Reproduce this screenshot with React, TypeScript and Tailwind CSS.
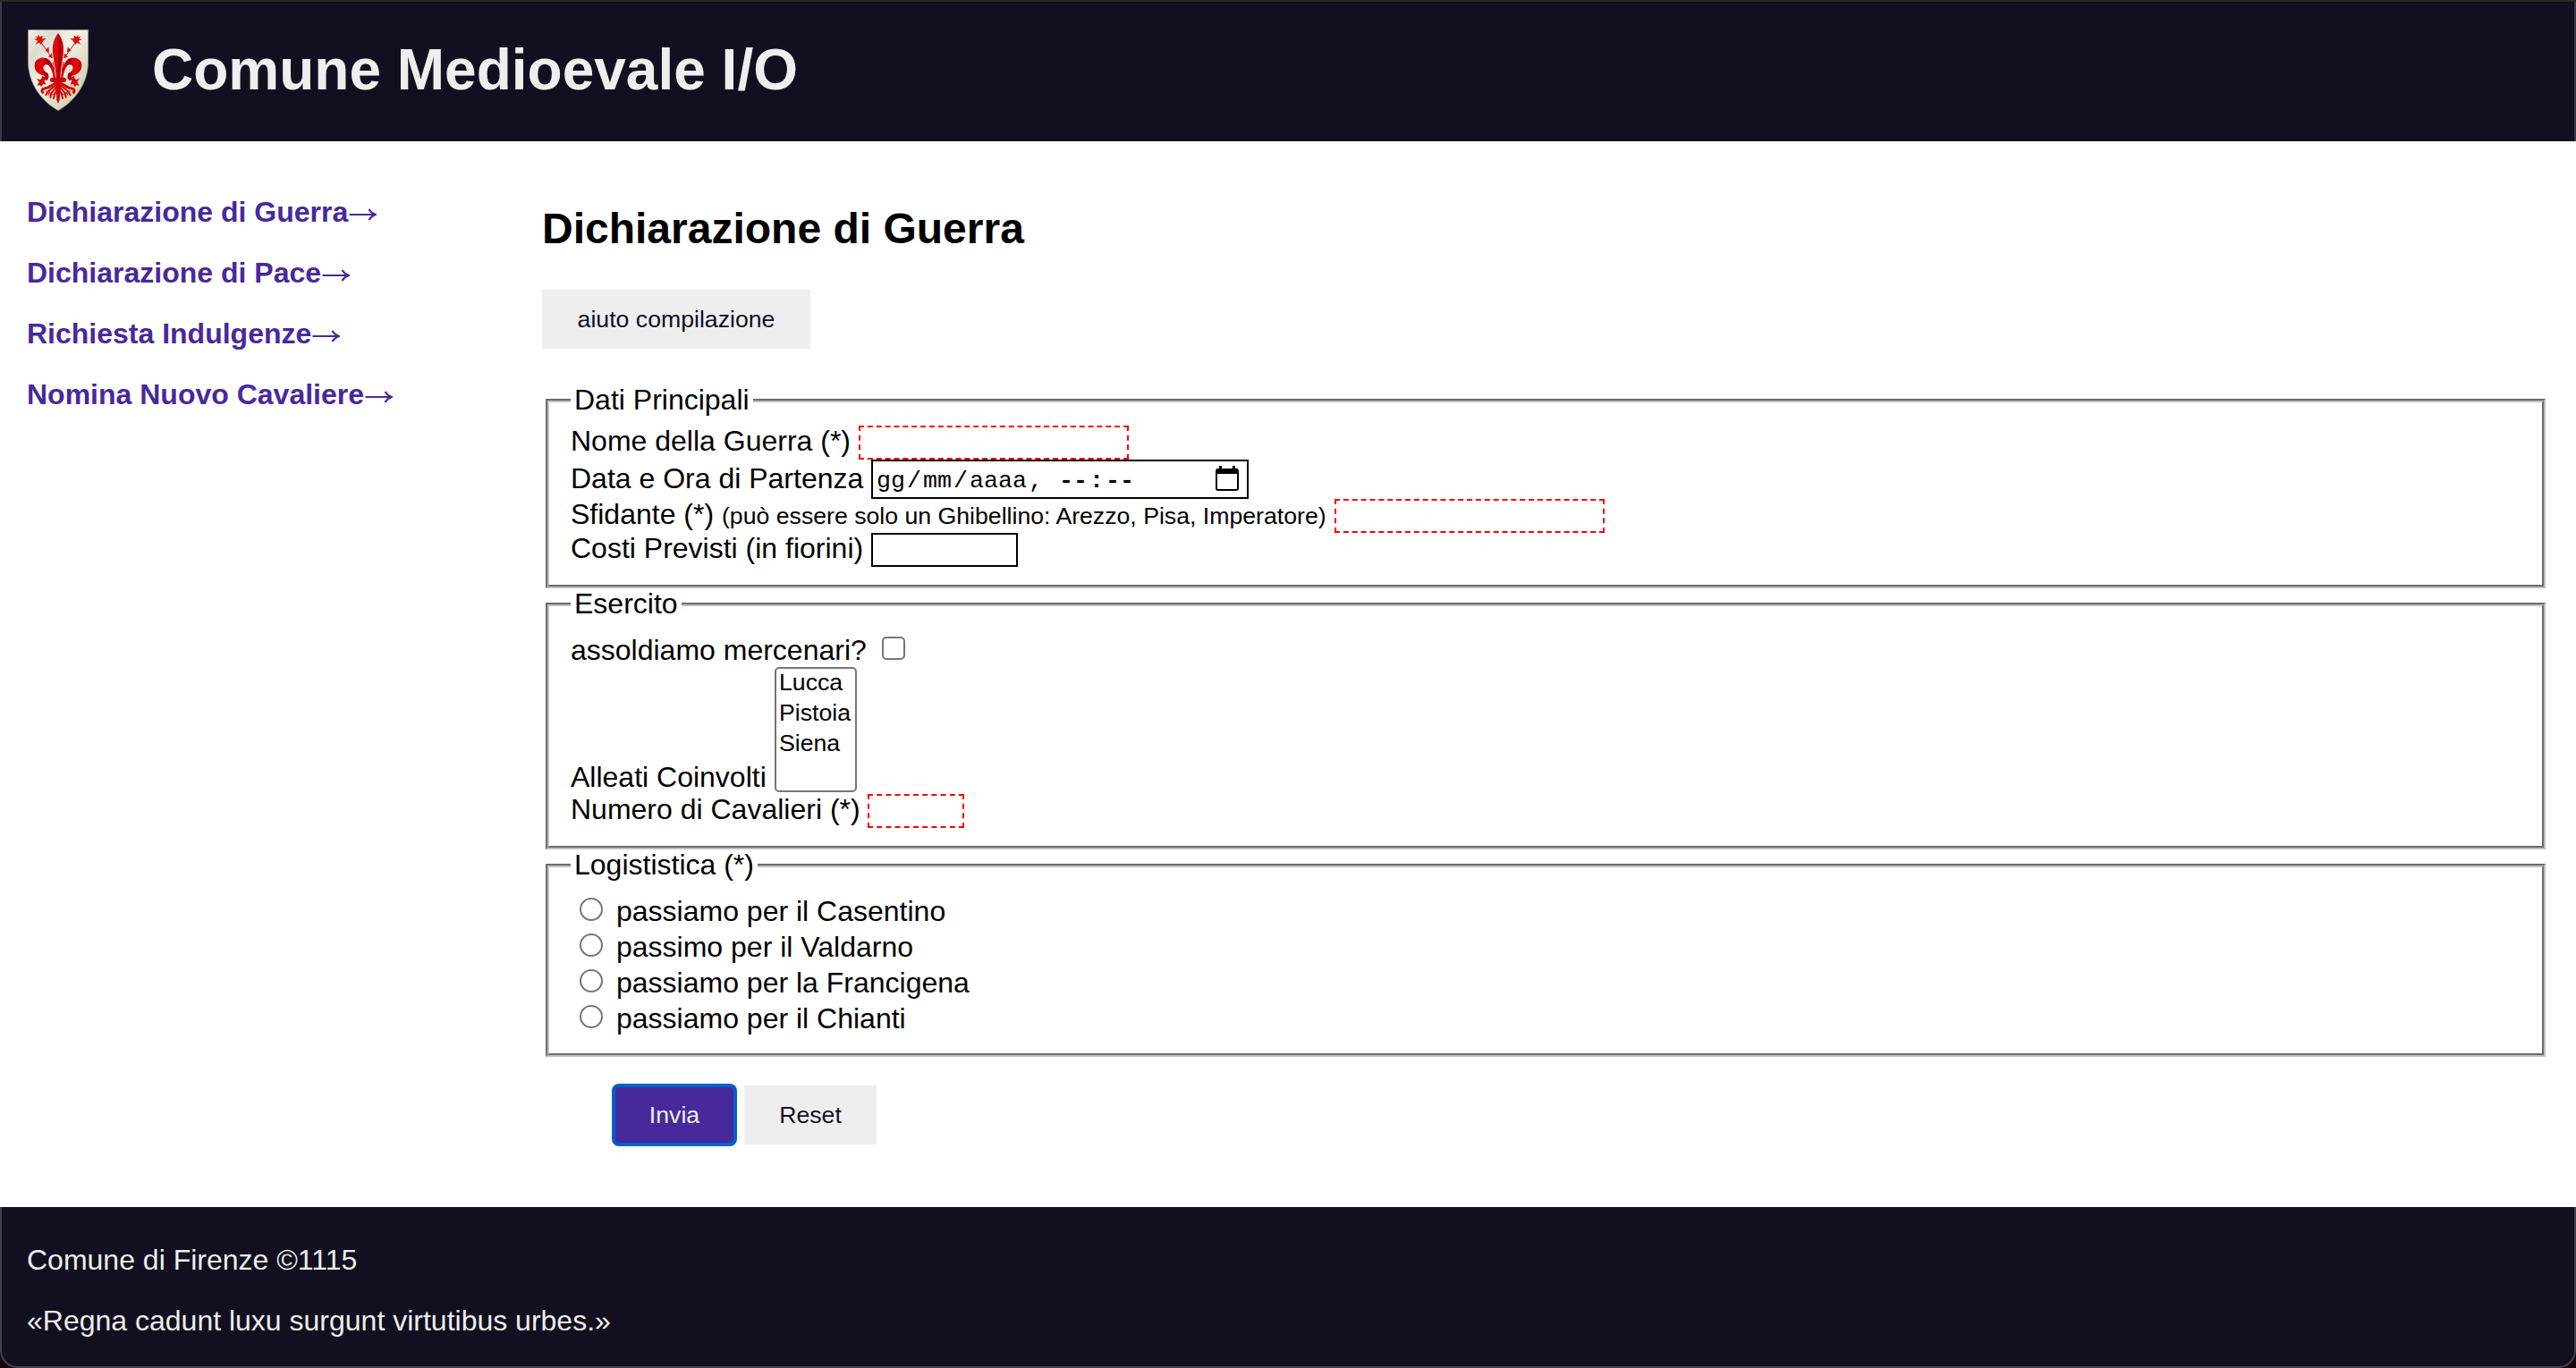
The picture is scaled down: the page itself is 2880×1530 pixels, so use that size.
import type { ReactNode } from 'react';

const links = ['Dichiarazione di Guerra', 'Dichiarazione di Pace', 'Richiesta Indulgenze', 'Nomina Nuovo Cavaliere'];
const allies = ['Lucca', 'Pistoia', 'Siena'];
const routes = [
  'passiamo per il Casentino',
  'passimo per il Valdarno',
  'passiamo per la Francigena',
  'passiamo per il Chianti',
];

function Crest() {
  return (
    <svg className="block h-[91px] w-[68px]" viewBox="63 40 204 273" aria-label="Stemma">
      <defs>
        <linearGradient id="field" x1="0" y1="0" x2="1" y2="1">
          <stop offset="0" stopColor="#f3efe4" />
          <stop offset="0.2" stopColor="#dedbd0" />
          <stop offset="0.42" stopColor="#f6f4e8" />
          <stop offset="0.6" stopColor="#e4e1cf" />
          <stop offset="0.8" stopColor="#d5d3b4" />
          <stop offset="1" stopColor="#c9c8a0" />
        </linearGradient>
        <linearGradient id="petal" x1="0" y1="0" x2="1" y2="0">
          <stop offset="0" stopColor="#c40808" />
          <stop offset="0.35" stopColor="#ea0a0a" />
          <stop offset="0.6" stopColor="#a80010" />
          <stop offset="1" stopColor="#d80808" />
        </linearGradient>
        <g id="side">
          <path
            fill="url(#petal)"
            d="M155 205C154 178 148 156 137 144C124 130 98 132 88 149C81 170 92 190 115 194C121 197 122 201 117 206L126 212C135 205 136 193 128 185C115 180 112 165 119 160C127 155 136 160 141 172C146 184 149 195 149 207Z"
          />
          <path fill="#d00b0b" d="M112 195L124 203L119 212L124 226L115 222L108 233L104 226L94 229L101 216L93 204L105 209L110 203Z" />
          <path d="M108 84L145 136M153 207C153 185 151 165 147 148" stroke="#d00b0b" strokeWidth="3" fill="none" />
          <path
            fill="#d81010"
            d="M97 57L104 65L112 60L112 71L125 70L114 79L108 92L102 84L89 90L97 78L84 72L95 71L88 61L98 66ZM121 112L133 98L135 116ZM132 132L144 119L146 136Z"
          />
          <g stroke="#cf0808" fill="none" strokeLinecap="round">
            <path strokeWidth="9" d="M158 221C144 224 134 238 119 238C111 239 109 245 113 251" />
            <path strokeWidth="6" d="M158 228C144 236 130 246 124 260M159 234C150 243 139 252 139 267M161 240C157 250 151 258 150 271" />
            <path strokeWidth="3" d="M135 248L124 247M147 250L136 254M155 254L145 259M136 250L133 260" />
          </g>
        </g>
      </defs>
      <path d="M64 41H266V145C266 222 220 281 165 312C110 281 64 222 64 145Z" fill="url(#field)" stroke="#8e8b7d" strokeWidth="2" />
      <use href="#side" />
      <use href="#side" transform="matrix(-1 0 0 1 330 0)" />
      <path d="M165 52C151 70 145 92 147 117C150 148 158 176 158 206H172C172 176 180 148 183 117C185 92 179 70 165 52Z" fill="url(#petal)" />
      <rect x="138" y="201" width="54" height="16" rx="8" fill="#c60707" />
      <path d="M158 215H172V240L170 276L165 289L160 276L158 240Z" fill="#d00606" />
    </svg>
  );
}

function Arrow() {
  return (
    <svg className="inline-block h-[14px] w-[32px]" viewBox="0 0 32 14" fill="none" stroke="#48299b" strokeWidth="2.1">
      <path d="M1.500 7H30M23.500 1C25.500 4.500 28 6 31 7C28 8 25.500 9.500 23.500 13" />
    </svg>
  );
}

function Group({ title, children }: { title: string; children: ReactNode }) {
  return (
    <fieldset className="mx-1 -mb-px border-4 border-[#c0c0c0] px-6 pt-[9px] pb-5 [border-style:groove]">
      <legend className="px-1 pb-[2px] leading-[36px]">{title}</legend>
      {children}
    </fieldset>
  );
}

function CalendarIcon() {
  return (
    <svg className="h-[28px] w-[26px]" viewBox="0 0 26 28">
      <rect x="1" y="4" width="24" height="23" rx="2" fill="none" stroke="#000" strokeWidth="2" />
      <path d="M1 3H25V9H1ZM4 0H7V4H4ZM19 0H22V4H19Z" fill="#000" />
    </svg>
  );
}

export default function App() {
  return (
    <div className="relative flex h-[1530px] w-[2880px] flex-col overflow-hidden bg-white font-['Liberation_Sans',Arial,sans-serif] text-[32px] text-black">
      <header className="flex h-[158px] shrink-0 items-start bg-[#121020] pl-[31px]">
        <div className="pt-[33px]">
          <Crest />
        </div>
        <h1 className="ml-[71px] pt-[42px] text-[64px] leading-[72px] font-bold text-[#eeeeee]">Comune Medioevale I/O</h1>
      </header>

      <div className="flex grow">
        <nav className="w-[606px] shrink-0 pt-[61px] pl-[30px]">
          <ul className="flex flex-col gap-8 leading-[36px] font-bold text-[#48299b]">
            {links.map((l) => (
              <li key={l} className="flex items-center whitespace-nowrap">
                <a href="#">{l}</a>
                <span className="flex pt-[6px]">
                  <Arrow />
                </span>
              </li>
            ))}
          </ul>
        </nav>

        <main className="w-[2244px] pt-[71px]">
          <h2 className="text-[48px] leading-[53px] font-bold">Dichiarazione di Guerra</h2>
          <button className="mt-[42px] mb-[39px] block h-[66px] w-[300px] bg-[#eeeeee] text-[26.667px] whitespace-nowrap text-[#121020]">
            aiuto compilazione
          </button>

          <form>
            <Group title="Dati Principali">
              <div className="flex h-[38px] items-start">
                <label className="w-[322px] leading-[34px] whitespace-nowrap">Nome della Guerra (*)</label>
                <input className="h-[38px] w-[302px] border-2 border-dashed border-[#ff0000]" />
              </div>
              <div className="flex h-[44px] items-start">
                <label className="w-[336px] leading-[42px] whitespace-nowrap">Data e Ora di Partenza</label>
                <div className="flex h-[44px] w-[422px] justify-between border-2 border-black pr-[9px] pl-[2px] font-['Liberation_Mono',monospace] text-[26.667px]">
                  <div className="flex leading-[44px]">
                    <span className="px-[2px]">gg</span>
                    <span>/</span>
                    <span className="px-[2px]">mm</span>
                    <span>/</span>
                    <span className="px-[2px]">aaaa</span>
                    <span className="whitespace-pre">, </span>
                    <span className="px-[2px] font-bold">--</span>
                    <span className="font-bold">:</span>
                    <span className="px-[2px] font-bold">--</span>
                  </div>
                  <div className="pt-[5px]">
                    <CalendarIcon />
                  </div>
                </div>
              </div>
              <div className="flex h-[38px] items-start">
                <label className="w-[854px] leading-[34px] whitespace-nowrap">
                  Sfidante (*) <span className="text-[26.667px] leading-none">(può essere solo un Ghibellino: Arezzo, Pisa, Imperatore)</span>
                </label>
                <input className="h-[38px] w-[302px] border-2 border-dashed border-[#ff0000]" />
              </div>
              <div className="flex h-[38px] items-start">
                <label className="w-[336px] leading-[34px] whitespace-nowrap">Costi Previsti (in fiorini)</label>
                <input className="h-[38px] w-[164px] border-2 border-black" />
              </div>
            </Group>

            <Group title="Esercito">
              <div className="flex h-[42px] items-start">
                <label className="w-[348px] leading-[46px] whitespace-nowrap">assoldiamo mercenari?</label>
                <input type="checkbox" className="mt-2 size-[26px] appearance-none rounded-[5px] border-2 border-[#767676] bg-white" />
              </div>
              <div className="flex h-[142px] items-start">
                <label className="mt-[106px] w-[228px] leading-[34px] whitespace-nowrap">Alleati Coinvolti</label>
                <ul className="h-[140px] w-[92px] rounded-[5px] border-2 border-[#767676] pl-[3px] text-[26.667px] leading-[34px]">
                  {allies.map((a) => (
                    <li key={a} className="-mt-[2px] mb-[2px] whitespace-nowrap">
                      {a}
                    </li>
                  ))}
                </ul>
              </div>
              <div className="flex h-[38px] items-start">
                <label className="w-[332px] leading-[34px] whitespace-nowrap">Numero di Cavalieri (*)</label>
                <input className="h-[38px] w-[108px] border-2 border-dashed border-[#ff0000]" />
              </div>
            </Group>

            <Group title="Logististica (*)">
              <div className="h-[162px]">
                {routes.map((r) => (
                  <label key={r} className="flex h-[40px] items-start pl-[10px] leading-[46px]">
                    <input type="radio" name="route" className="mt-2 mr-[15px] size-[26px] appearance-none rounded-full border-2 border-[#767676] bg-white" />
                    {r}
                  </label>
                ))}
              </div>
            </Group>

            <div className="mt-[33px] ml-[80px] flex gap-[10px] text-[26.667px]">
              <button type="button" className="h-[66px] w-[136px] rounded-[6px] bg-[#48299b] text-[#eeeeee] shadow-[0_0_0_2px_#0060d0,inset_0_0_0_2px_#0060d0]">
                Invia
              </button>
              <button type="button" className="h-[66px] w-[148px] bg-[#eeeeee] text-[#121020]">
                Reset
              </button>
            </div>
          </form>
        </main>
      </div>

      <footer className="flex h-[180px] shrink-0 flex-col gap-8 bg-[#121020] pt-[41px] pl-[30px] leading-[36px] text-[#eeeeee]">
        <p>Comune di Firenze ©1115</p>
        <p>«Regna cadunt luxu surgunt virtutibus urbes.»</p>
      </footer>

      <div className="absolute top-0 left-0 h-[2px] w-full bg-[#292a2a]" />
      <div className="absolute top-[2px] left-0 h-[156px] w-full border-x-2 border-[#3b3a48]" />
      <div className="absolute bottom-0 left-0 h-[180px] w-full overflow-hidden">
        <div className="h-full rounded-b-[20px] border-x-2 border-b-2 border-[#42414d] shadow-[0_0_0_30px_#1c0308]" />
      </div>
    </div>
  );
}
